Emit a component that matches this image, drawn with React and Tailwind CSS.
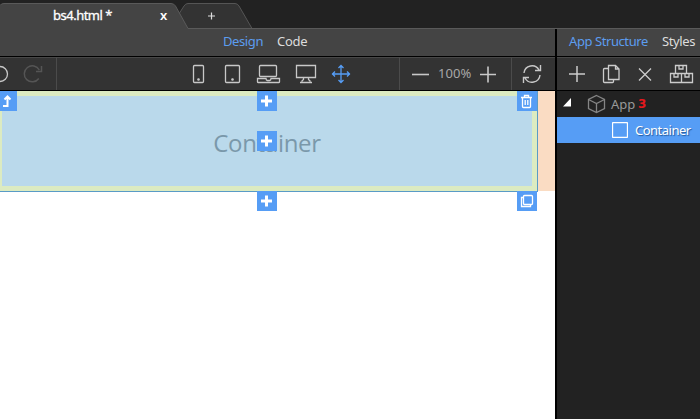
import React from 'react';

function Icon({ w, h, className = '', children }) {
  return (
    <svg width={w} height={h} viewBox={`0 0 ${w} ${h}`} fill="none" stroke="currentColor" strokeWidth="1.3" className={`block shrink-0 ${className}`}>
      {children}
    </svg>
  );
}

function Badge({ className, children }) {
  return <div className={`absolute flex h-5 w-5 items-center justify-center bg-[#569df5] text-white ${className}`}>{children}</div>;
}

function Plus() {
  return <Icon w={20} h={20}><path d="M9.500 4.500v11M4 10h11" strokeWidth="3" /></Icon>;
}

function Tabs() {
  return (
    <header className="relative h-7 bg-[#222]">
      <svg width="700" height="29" className="absolute left-0 top-0">
        <path d="M178 29 179.500 13 184 6q1.500-2.500 4-2.500h47q2.500 0 4 2.500l13 22.500z" fill="#333" stroke="#555" />
        <path d="M0 5.500q1-2 4-2h167q3 0 4.500 2.500l12.500 22.500H700V30H0z" fill="#444" />
        <path d="M0 5.500q1-2 4-2h167q3 0 4.500 2.500l12.500 22.500H700" fill="none" stroke="#5a5a5a" />
      </svg>
      <div className="relative flex h-7 items-center pt-1 text-[13px] text-white">
        <span className="ml-[53px] w-[107px] whitespace-nowrap tracking-[-0.5px] [-webkit-text-stroke:0.3px]">bs4.html *</span>
        <span className="w-12 text-[13px] font-semibold">x</span>
        <Icon w={8} h={8} className="text-[#ddd]"><path d="M3.500 .5v7M0 4h7" strokeWidth="1.200" /></Icon>
      </div>
    </header>
  );
}

function Toolbar() {
  return (
    <div className="flex h-[35px] border-y border-black bg-[#333] text-[#c8c8c8] shadow-[inset_0_1px_0_#484848]">
      <div className="flex w-[57px] shrink-0 items-center border-r border-[#4b4b4b]">
        <Icon w={56} h={33}>
          <circle cx="0" cy="17" r="7.500" />
          <path d="M38.800 21.500a8 8 0 1 1 .5-8.500M41.500 9v5.500H36" stroke="#555" strokeWidth="1.500" />
        </Icon>
      </div>
      <div className="flex w-[343px] shrink-0 border-r border-[#4b4b4b]">
        <Icon w={342} h={33} className="ml-[-1px]">
          <rect x="137.500" y="8.500" width="10" height="17" rx="1" />
          <circle cx="142.500" cy="22.500" r=".7" fill="currentColor" />
          <rect x="169.500" y="8.500" width="14" height="17" rx="1" />
          <circle cx="176.500" cy="22.500" r=".7" fill="currentColor" />
          <rect x="203.500" y="8.500" width="17" height="11" rx="1" />
          <path d="M201.500 21.500h8.500q0 2 1.500 2h2q1.500 0 1.500-2h8.500v3.500q0 .5-.5 .5h-21q-.5 0-.5-.5z" />
          <path d="M240.500 8.500h19v12h-19zM247.500 21v1.500l-2 2M252.500 21v1.500l2 2M244 25.500h12" />
          <path d="M285 8v18M276 17h18M282.500 11 285 8.500l2.500 2.500M282.500 23l2.500 2.500 2.500-2.500M279 14.500 276.500 17l2.500 2.500M291 14.500l2.500 2.500-2.500 2.500" stroke="#569df5" />
        </Icon>
      </div>
      <div className="flex w-[112px] shrink-0 items-center border-r border-[#4b4b4b] pl-3">
        <Icon w={17} h={17} className="mt-px"><path d="M0 8.500h17" strokeWidth="1.600" /></Icon>
        <span className="ml-[9px] w-[42px] text-[13px] tracking-[0.1px] text-[#a8a8a8]">100%</span>
        <Icon w={16} h={17} className="mt-px"><path d="M0 8.500h16M8 .5v16" strokeWidth="1.600" /></Icon>
      </div>
      <div className="flex flex-1 items-center justify-center">
        <Icon w={20} h={20} className="ml-[-3px] mt-px">
          <path d="M2 9a8 8 0 0 1 15-3M18.500 1v5.500H13M18 11A8 8 0 0 1 3 14M1.500 19v-5.500H7" strokeWidth="1.400" />
        </Icon>
      </div>
    </div>
  );
}

function Canvas() {
  return (
    <div className="relative flex-1 bg-white">
      <div className="flex h-[101px]">
        <div className="w-[538px] border-b border-r border-[#599bc6] bg-[#dcebc1] pb-[5px] pl-[2px] pr-[5px] pt-[5px]">
          <div className="flex h-[90px] items-center justify-center bg-[#bad9eb] font-['Open_Sans','Noto_Sans',sans-serif] text-[24px] text-[#7a98aa]">
            <span className="mt-[4px] tracking-[-0.3px]">Container</span>
          </div>
        </div>
        <div className="h-[100px] flex-1 bg-[#fadcc3]" />
      </div>
      <Badge className="left-[-3px] top-0">
        <Icon w={20} h={20}><path d="M6 15h4.500V5.500M7.500 8.500l3-3 3 3" strokeWidth="2" /></Icon>
      </Badge>
      <Badge className="left-[257px] top-0"><Plus /></Badge>
      <Badge className="left-[257px] top-10"><Plus /></Badge>
      <Badge className="left-[257px] top-[100px]"><Plus /></Badge>
      <Badge className="left-[517px] top-0">
        <Icon w={20} h={20}><path d="M4 6.500h11M7.500 6V4.500h4V6M5.500 6.500v9q0 1 1 1h6q1 0 1-1v-9M8.200 9v5M10.800 9v5" /></Icon>
      </Badge>
      <Badge className="left-[517px] top-[100px]">
        <Icon w={20} h={20}><rect x="6.500" y="4.500" width="9" height="9" rx="1" /><path d="M6 6.500H4.500v9h9V14" /></Icon>
      </Badge>
    </div>
  );
}

function Sidebar() {
  return (
    <aside className="flex w-[145px] shrink-0 flex-col border-l-2 border-black bg-[#222]">
      <div className="flex h-7 items-center whitespace-nowrap bg-[#444] pl-3 text-[13px] shadow-[inset_0_1px_0_#5a5a5a]">
        <span className="w-[93px] tracking-[-0.42px] text-[#5c9df0]">App Structure</span>
        <span className="tracking-[-0.4px] text-[#ddd]">Styles</span>
      </div>
      <div className="h-[35px] border-y border-black bg-[#333] text-[#ccc] shadow-[inset_0_1px_0_#484848]">
        <Icon w={143} h={33}>
          <path d="M12 17h16M20 9v16" strokeWidth="1.500" />
          <path d="M51.500 8.500h7l3.500 3.500v10.500H51.500zM58.500 8.500V12H62M51 11.500h-3.500q-1 0-1 1v12q0 1 1 1h8q1 0 1-1V23" />
          <path d="m82 11.500 12 12M94 11.500l-12 12" />
          <path d="M118.500 8.500h11v8h-11zM122 9v3h4V9M113.500 16.500h11v9h-11zM117 17v3h4v-3M124.500 16.500h11v9h-11zM128 17v3h4v-3" />
        </Icon>
      </div>
      <div className="flex h-[26px] items-center text-[13px]">
        <Icon w={10} h={10} className="ml-[6px] mt-[-2px] text-white"><path d="M8 0v8.500H0z" fill="currentColor" stroke="none" /></Icon>
        <Icon w={19} h={20} className="ml-[14px] text-[#858585]"><path d="m9.500 1.500 8 4v9l-8 4-8-4v-9zM1.500 5.500l8 4 8-4M9.500 9.500v9" /></Icon>
        <span className="ml-[5px] mt-[2px] w-[27px] text-[#999]">App</span>
        <span className="mt-[-1px] font-['DejaVu_Sans',sans-serif] text-[12px] font-bold text-[#e5181d]">3</span>
      </div>
      <div className="flex h-[26px] items-center bg-[#569df5] text-[13px] text-white">
        <Icon w={16} h={16} className="ml-[55px]"><rect x=".5" y=".5" width="15" height="15" rx="1" /></Icon>
        <span className="ml-[7px] mt-[2px] tracking-[-0.5px] [text-shadow:1px_1px_1px_#245a9c]">Container</span>
      </div>
    </aside>
  );
}

export default function App() {
  return (
    <div className="flex h-[419px] w-[700px] flex-col overflow-hidden bg-[#222] font-['Noto_Sans','Open_Sans',sans-serif]">
      <Tabs />
      <div className="flex min-h-0 flex-1">
        <main className="flex w-[555px] shrink-0 flex-col">
          <div className="flex h-7 items-center bg-[#444] text-[13px] shadow-[inset_0_1px_0_#5a5a5a]">
            <span className="ml-[223px] w-[54px] tracking-[-0.4px] text-[#5c9df0]">Design</span>
            <span className="tracking-[-0.3px] text-[#ddd]">Code</span>
          </div>
          <Toolbar />
          <Canvas />
        </main>
        <Sidebar />
      </div>
    </div>
  );
}
